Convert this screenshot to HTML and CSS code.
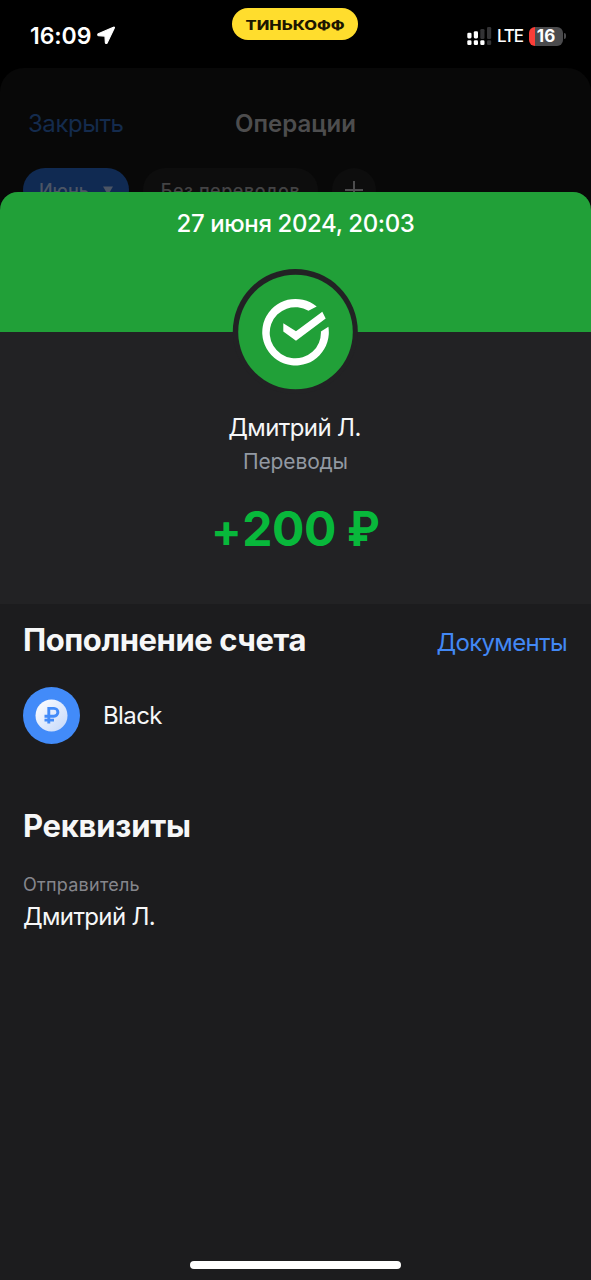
FILE: index.html
```html
<!DOCTYPE html>
<html lang="ru">
<head>
<meta charset="utf-8">
<meta name="viewport" content="width=device-width, initial-scale=1">
<title>Операция</title>
<link rel="stylesheet" href="styles.css">
</head>
<body>
<div class="phone">
  <header class="status">
    <div class="status-left">
      <span class="clock">16:09</span>
      <svg class="location" width="18" height="19" viewBox="0 0 18 19"><path d="M16.400 1.200 1.300 7.800c-.8.4-.6 1.800.3 1.900l6.400.4.4 6.600c.1.9 1.300 1 1.700.2L17.300 2c.3-.6-.3-1.100-.9-.8z" fill="#fff" stroke="#fff" stroke-width="1.200" stroke-linejoin="round"/></svg>
    </div>
    <div class="brand"><span>ТИНЬКОФФ</span></div>
    <div class="status-right">
      <svg class="signal" width="25" height="20" viewBox="0 0 25 20">
        <g fill="#333335"><rect x="13.300" y="3" width="4.200" height="10" rx="1.300"/><rect x="20" y="1" width="4.200" height="12" rx="1.300"/><rect x="20" y="14.300" width="4.200" height="4.700" rx="1.300"/></g>
        <g fill="#fff"><rect x=".3" y="6.800" width="4.200" height="5.600" rx="1.300"/><rect x="6.800" y="5.300" width="4.200" height="7.100" rx="1.300"/><rect x=".3" y="14.300" width="4.200" height="4.700" rx="1.300"/><rect x="6.800" y="14.300" width="4.200" height="4.700" rx="1.300"/><rect x="13.300" y="14.300" width="4.200" height="4.700" rx="1.300"/></g>
      </svg>
      <span class="network">LTE</span>
      <span class="battery"><span>16</span></span>
      <span class="battery-tip"></span>
    </div>
  </header>

  <section class="backdrop">
    <div class="nav">
      <span class="close">Закрыть</span>
      <span class="nav-title">Операции</span>
      <span></span>
    </div>
    <div class="chips">
      <span class="chip chip-month">Июнь<svg width="10" height="9" viewBox="0 0 10 9"><path d="M0 .5h10L5 9z" fill="#4c5564"/></svg></span>
      <span class="chip chip-filter">Без переводов</span>
      <span class="chip chip-add"><svg width="18" height="18" viewBox="0 0 18 18"><path d="M9 0v18M0 9h18" stroke="#4d4d4e" stroke-width="2"/></svg></span>
    </div>
  </section>

  <main class="sheet">
    <div class="banner"><time>27 июня 2024, 20:03</time></div>
    <section class="summary">
      <svg class="avatar" width="127" height="126" viewBox="232 269 127 126">
        <circle cx="295.300" cy="331.600" r="62.500" fill="#222224"/>
        <circle cx="295.500" cy="332" r="57.300" fill="#21a038"/>
        <path d="M316.700 306.500A33.300 33.300 0 1 0 328.400 326.800L320.900 331.600A25.600 25.600 0 1 1 308.500 310.800Z" fill="#fff"/>
        <path d="M283.300 323.300 296 331.300 322.300 311.700 325.700 318.500 296 340.700 283.300 331.500Z" fill="#fff"/>
      </svg>
      <div class="name">Дмитрий Л.</div>
      <div class="category">Переводы</div>
      <div class="amount"><span class="plus">+</span>200 <span class="ruble">₽</span></div>
    </section>
    <section class="details">
      <div class="details-head"><h2>Пополнение счета</h2><span class="docs">Документы</span></div>
      <div class="account">
        <svg width="57" height="57" viewBox="0.5 0.5 57 57">
          <defs><linearGradient id="coin" x1="0" y1="0" x2="1" y2="1"><stop offset="0" stop-color="#fff"/><stop offset="1" stop-color="#c3d7fa"/></linearGradient></defs>
          <circle cx="29" cy="29" r="28.500" fill="#428bf9"/>
          <circle cx="29" cy="29" r="16" fill="url(#coin)"/>
          <path d="M26.300 37V21.900h5.200a3.900 3.900 0 0 1 0 7.800H22M22 33.600h9.500" fill="none" stroke="#428bf9" stroke-width="2.900"/>
        </svg>
        <span>Black</span>
      </div>
      <h2 class="requisites">Реквизиты</h2>
      <div class="label">Отправитель</div>
      <div class="value">Дмитрий Л.</div>
    </section>
    <div class="home"></div>
  </main>
</div>
</body>
</html>
```

FILE: styles.css
```css
* { box-sizing: border-box; }
body { margin: 0; background: #000; font-family: Inter, "Liberation Sans", sans-serif; }
.phone { width: 591px; height: 1280px; display: flex; flex-direction: column; overflow: hidden; color: #f6f7f8; white-space: nowrap; }

.status { height: 68px; flex: none; display: grid; grid-template-columns: 202px 126px 1fr; padding: 8px 25px 0 30px; color: #fff; }
.status-left { display: flex; align-items: flex-start; gap: 6px; padding-top: 13px; }
.clock { font-size: 23px; line-height: 30px; font-weight: 600; letter-spacing: -.05px; }
.location { margin-top: 5px; }
.brand { height: 32px; border-radius: 16px; background: #ffdd2d; color: #1c1600; display: flex; align-items: center; justify-content: center; }
.brand span { font-size: 13px; font-weight: 800; line-height: 20px; padding-top: 1px; transform: scaleX(1.27); }
.status-right { display: flex; justify-content: flex-end; align-items: center; height: 56px; }
.network { font-size: 17px; font-weight: 500; letter-spacing: -1.1px; margin: 0 6px 0 5px; }
.battery { width: 34px; height: 19px; border-radius: 6px; background: linear-gradient(90deg, #fb3e38 6px, #4b4b4d 6px); display: flex; align-items: center; justify-content: center; font-size: 17px; font-weight: 700; }
.battery-tip { width: 2px; height: 6px; margin-left: 1px; border-radius: 0 2px 2px 0; background: #4b4b4d; }

.backdrop { height: 144px; flex: none; background: #080808; border-radius: 24px 24px 0 0; padding: 41px 23px 0; }
.nav { display: grid; grid-template-columns: 1fr auto 1fr; line-height: 30px; font-size: 24px; }
.close { color: #142b4d; padding-left: 5px; letter-spacing: -.45px; }
.nav-title { color: #4d4d4e; font-weight: 600; }
.chips { display: flex; gap: 14px; padding-top: 29px; }
.chip { height: 44px; border-radius: 22px; background: #0d0d0d; color: #434344; font-size: 18px; font-weight: 500; display: flex; align-items: center; justify-content: center; }
.chip-month { width: 106px; gap: 14px; background: #102a52; color: #4c5564; }
.chip-filter { width: 175px; letter-spacing: .5px; }
.chip-add { width: 44px; }

.sheet { flex: 1; margin-top: -20px; display: flex; flex-direction: column; background: #1c1c1e; border-radius: 18px 18px 0 0; overflow: hidden; position: relative; }
.banner { height: 140px; flex: none; background: #21a038; text-align: center; padding-top: 17px; font-size: 24px; line-height: 30px; font-weight: 500; letter-spacing: -.38px; color: #fff; }
.summary { height: 272px; flex: none; background: #222224; display: flex; flex-direction: column; align-items: center; }
.avatar { margin-top: -63px; flex: none; }
.name { margin-top: 18px; padding-right: 2px; font-size: 24px; line-height: 30px; letter-spacing: -.6px; }
.category { margin-top: 5px; font-size: 21px; line-height: 28px; letter-spacing: -.15px; color: #9299a2; }
.amount { margin-top: 23px; padding-right: 2px; font-size: 48px; line-height: 60px; font-weight: 700; letter-spacing: -.5px; color: #08b83b; }
.plus { display: inline-block; transform: translateY(2px) scale(.94); }
.ruble { display: inline-block; transform: scaleX(.92); transform-origin: left; margin-right: -3px; }
.details { padding: 17px 23px 0; }
.details-head { display: flex; justify-content: space-between; }
h2 { margin: 0; font-size: 31px; line-height: 38px; font-weight: 700; letter-spacing: -.45px; }
.docs { font-size: 24px; line-height: 30px; padding: 7px 1px 0 0; letter-spacing: -.65px; color: #4288f5; }
.account { display: flex; align-items: center; gap: 23px; margin-top: 28px; font-size: 24px; line-height: 30px; letter-spacing: -.6px; }
.requisites { margin-top: 63px; letter-spacing: -.25px; }
.label { margin-top: 28px; font-size: 18px; line-height: 24px; letter-spacing: .25px; color: #85868c; }
.value { margin-top: 5px; font-size: 24px; line-height: 30px; letter-spacing: -.65px; }
.home { width: 211px; height: 8px; border-radius: 4px; background: #fff; margin: auto auto 11px; }
```
